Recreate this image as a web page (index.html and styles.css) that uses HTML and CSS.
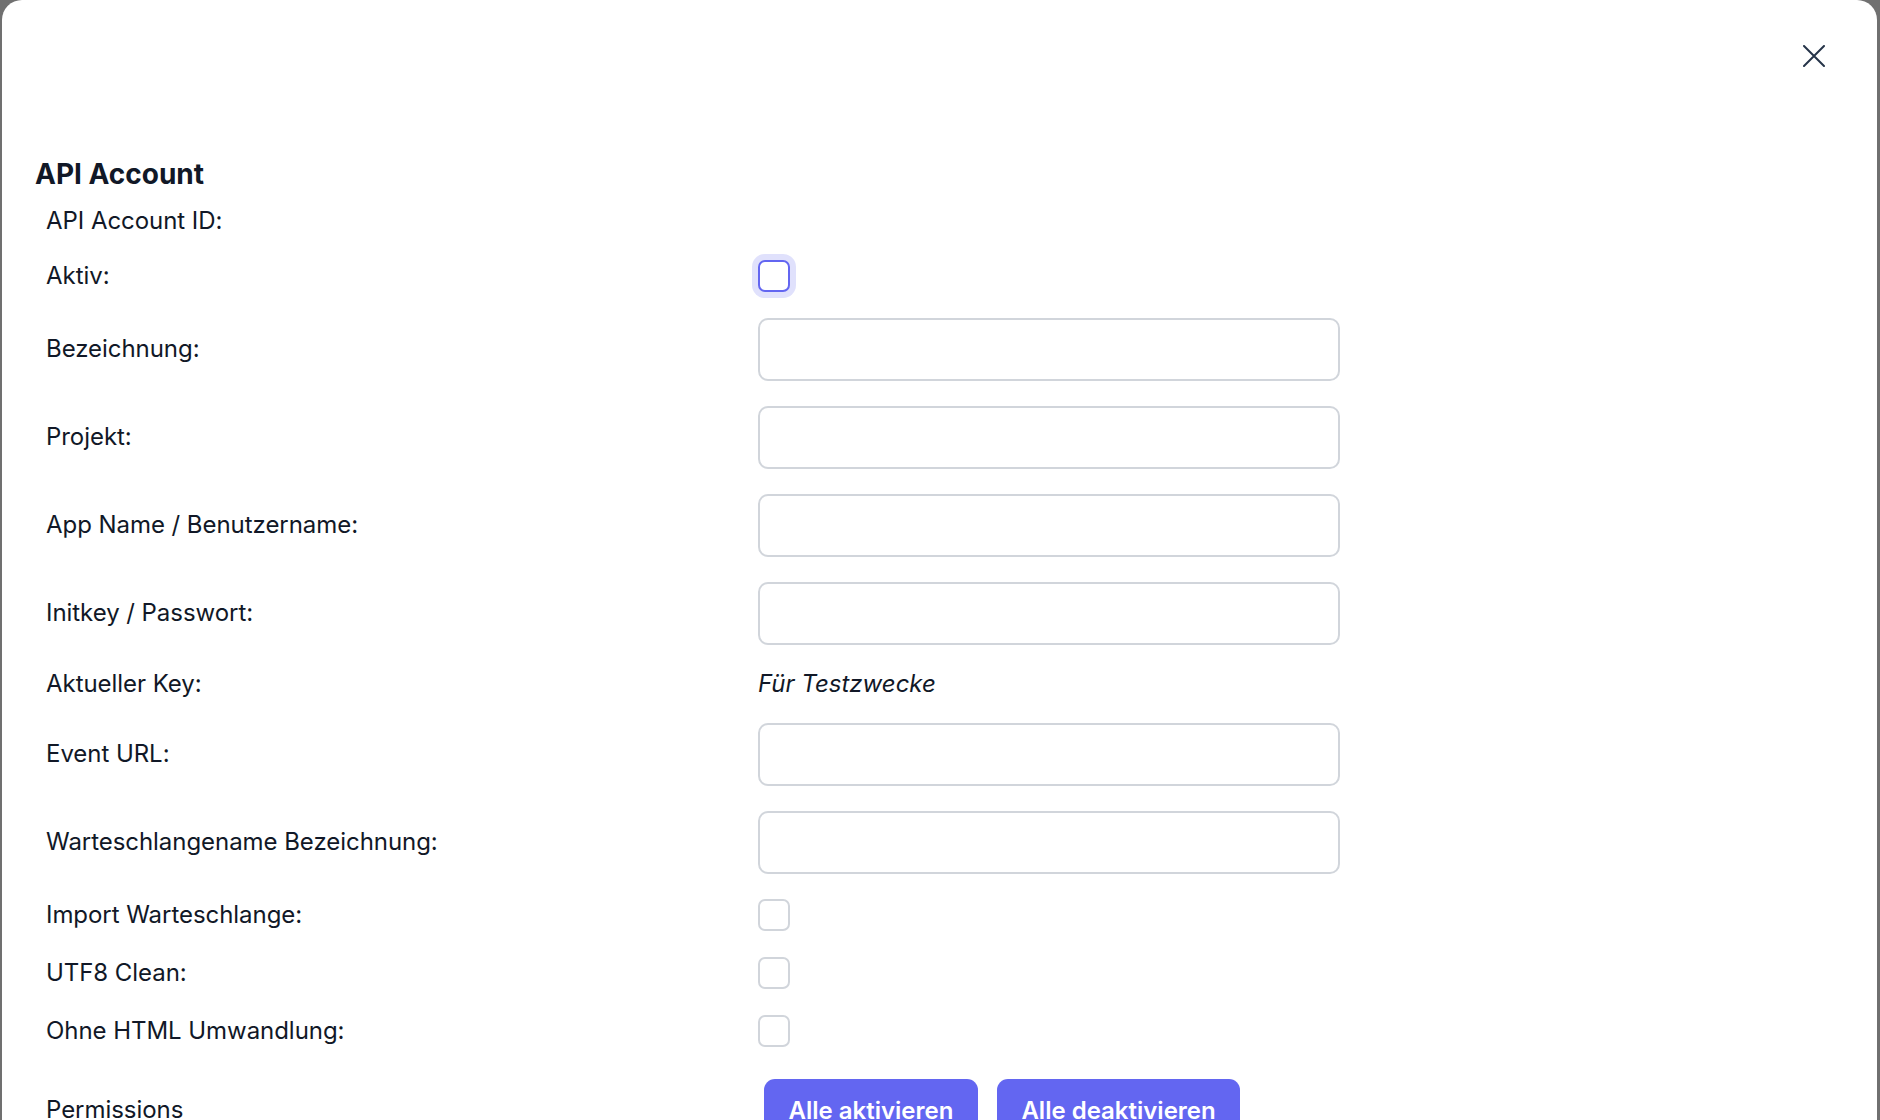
FILE: index.html
```html
<!DOCTYPE html>
<html lang="de">
<head>
<meta charset="utf-8">
<title>API Account</title>
<link rel="stylesheet" href="styles.css">
</head>
<body>
<div class="modal">
  <div class="modal-header">
    <button class="close-btn" type="button" aria-label="Schließen">
      <svg width="22" height="22" viewBox="0 0 22 22" fill="none" stroke="currentColor" stroke-width="2" stroke-linecap="round"><path d="M1 1L21 21M21 1L1 21"/></svg>
    </button>
  </div>
  <h2 class="title">API Account</h2>
  <div class="form">
    <div class="row row-text"><div class="label">API Account ID:</div><div class="value"></div></div>
    <div class="row row-check"><div class="label">Aktiv:</div><div class="value"><span class="checkbox focused"></span></div></div>
    <div class="row row-input"><div class="label">Bezeichnung:</div><div class="value"><input class="input" type="text"></div></div>
    <div class="row row-input"><div class="label">Projekt:</div><div class="value"><input class="input" type="text"></div></div>
    <div class="row row-input"><div class="label">App Name / Benutzername:</div><div class="value"><input class="input" type="text"></div></div>
    <div class="row row-input"><div class="label">Initkey / Passwort:</div><div class="value"><input class="input" type="text"></div></div>
    <div class="row row-text"><div class="label">Aktueller Key:</div><div class="value"><em class="hint">Für Testzwecke</em></div></div>
    <div class="row row-input"><div class="label">Event URL:</div><div class="value"><input class="input" type="text"></div></div>
    <div class="row row-input"><div class="label">Warteschlangename Bezeichnung:</div><div class="value"><input class="input" type="text"></div></div>
    <div class="row row-check"><div class="label">Import Warteschlange:</div><div class="value"><span class="checkbox"></span></div></div>
    <div class="row row-check"><div class="label">UTF8 Clean:</div><div class="value"><span class="checkbox"></span></div></div>
    <div class="row row-check"><div class="label">Ohne HTML Umwandlung:</div><div class="value"><span class="checkbox"></span></div></div>
    <div class="row row-perm"><div class="label">Permissions</div><div class="value buttons"><button class="btn" type="button">Alle aktivieren</button><button class="btn" type="button">Alle deaktivieren</button></div></div>
  </div>
</div>
</body>
</html>
```
FILE: styles.css
```css
html, body {
  margin: 0;
  padding: 0;
  height: 100%;
  overflow: hidden;
}
body {
  background: #707070;
  font-family: Inter, "Noto Sans", "Liberation Sans", sans-serif;
  color: #111827;
}
.modal {
  margin: 0 3px 0 2px;
  background: #ffffff;
  border-radius: 20px 20px 0 0;
  min-height: 1400px;
  padding: 0 33px;
  box-sizing: border-box;
}
.modal-header {
  height: 154px;
  box-sizing: border-box;
  padding-top: 45px;
  padding-right: 19px;
  display: flex;
  justify-content: flex-end;
  align-items: flex-start;
}
.close-btn {
  border: none;
  background: none;
  padding: 0;
  width: 22px;
  height: 22px;
  color: #263449;
  cursor: pointer;
  display: block;
}
.close-btn svg { display: block; }
.title {
  margin: 0;
  font-size: 28px;
  line-height: 40px;
  font-weight: 700;
  color: #111827;
}
.form {
  display: flex;
  flex-direction: column;
}
.row {
  display: flex;
  align-items: center;
  padding: 12.5px 0 12.5px 11px;
}
.label {
  width: 712px;
  flex: none;
  font-size: 24px;
  line-height: 28px;
  letter-spacing: -0.05px;
}
.value {
  flex: 1;
  display: flex;
  align-items: center;
}
.row-text { min-height: 28px; }
.row-check { min-height: 33px; }
.row-input .value { height: 63px; }
.input {
  width: 582px;
  height: 63px;
  box-sizing: border-box;
  border: 2px solid #d1d5db;
  border-radius: 10px;
  background: #fff;
  padding: 0 16px;
  font: inherit;
  font-size: 24px;
  outline: none;
}
.hint {
  font-size: 24px;
  line-height: 28px;
  font-style: italic;
}
.checkbox {
  display: block;
  width: 32px;
  height: 32px;
  box-sizing: border-box;
  border: 2px solid #d1d5db;
  border-radius: 7px;
  background: #fff;
}
.checkbox.focused {
  border-color: #6366f1;
  box-shadow: 0 0 0 6px #e0e1fc;
}
.row-perm { padding-top: 19px; }
.buttons {
  gap: 19px;
  padding-left: 6px;
}
.btn {
  height: 62px;
  padding: 0 24.5px;
  border: none;
  border-radius: 11px;
  background: #6366f1;
  color: #ffffff;
  font-family: Inter, "Noto Sans", "Liberation Sans", sans-serif;
  font-size: 24px;
  font-weight: 600;
  cursor: pointer;
}
```
